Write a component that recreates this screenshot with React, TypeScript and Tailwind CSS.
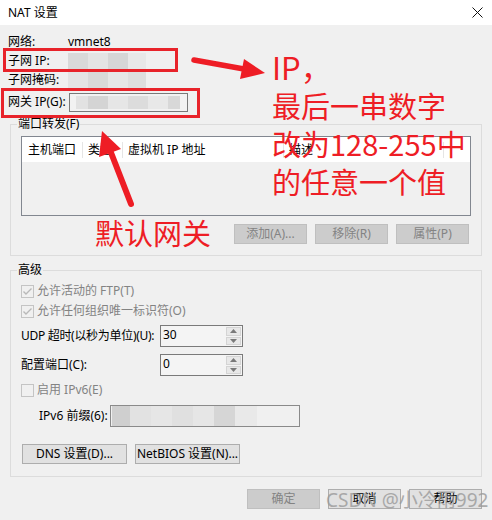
import React from "react";

const red = "#ee1d25";

function Blur({ widths, colors, h }: { widths: number[]; colors: string[]; h: string }) {
  return (
    <div className={`flex ${h}`}>
      {widths.map((w, i) => (
        <div key={i} style={{ width: w, background: colors[i % colors.length] }} />
      ))}
    </div>
  );
}

function CheckBox({ checked }: { checked: boolean }) {
  return (
    <svg width="13" height="13" viewBox="0 0 13 13" className="shrink-0">
      <rect x="0.5" y="0.5" width="12" height="12" fill="#f0f0f0" stroke="#c4c4c4" />
      {checked && <path d="M2.5 6.5 L5 9 L10.5 3.5" fill="none" stroke="#b8b8b8" strokeWidth="1.4" />}
    </svg>
  );
}

function Spinner({ value }: { value: string }) {
  return (
    <div className="flex h-[22px] w-[83px] border border-[#7a7a7a] bg-[#f4f4f4]">
      <div className="flex-1 pl-[2px] pt-[1px] text-[12px] leading-[16px] text-black">{value}</div>
      <div className="flex w-[16px] flex-col gap-[1px] py-[1px] pr-[1px]">
        <div className="flex flex-1 items-center justify-center border border-[#d4d4d4] bg-[#e8e8e8]">
          <svg width="7" height="4" viewBox="0 0 7 4"><path d="M0 4 L3.5 0 L7 4 Z" fill="#7a7a7a" /></svg>
        </div>
        <div className="flex flex-1 items-center justify-center border border-[#d4d4d4] bg-[#e8e8e8]">
          <svg width="7" height="4" viewBox="0 0 7 4"><path d="M0 0 L3.5 4 L7 0 Z" fill="#7a7a7a" /></svg>
        </div>
      </div>
    </div>
  );
}

function Btn({ label, disabled, w = "w-[73px]" }: { label: string; disabled?: boolean; w?: string }) {
  return (
    <div
      className={`flex h-[20px] ${w} items-center justify-center border text-[12px] ${
        disabled ? "border-[#bfbfbf] bg-[#cccccc] text-[#838383]" : "border-[#adadad] bg-[#e1e1e1] text-black"
      }`}
    >
      {label}
    </div>
  );
}

export default function App() {
  return (
    <div className="relative h-[520px] w-[492px] overflow-hidden bg-[#f0f0f0] font-['Noto_Sans','Noto_Sans_CJK_SC',sans-serif] text-[12px] leading-[16px] text-black">
      {/* Title bar */}
      <div className="flex h-[25px] items-center justify-between bg-white pl-[8px] pr-[9px]">
        <span className="text-[12px]">NAT 设置</span>
        <svg width="11" height="11" viewBox="0 0 11 11">
          <path d="M0.5 0.5 L10.5 10.5 M10.5 0.5 L0.5 10.5" stroke="#111" strokeWidth="1" />
        </svg>
      </div>

      {/* Network info */}
      <div className="pl-[8px] pt-[8px]">
        <div className="flex h-[18px] items-center">
          <span className="w-[60px]">网络:</span>
          <span>vmnet8</span>
        </div>
        <div className="flex h-[20px] items-center">
          <span className="w-[60px]">子网 IP:</span>
          <Blur h="h-[17px]" widths={[20, 20, 20, 18]} colors={["#d9d9d9", "#e4e4e4", "#d6d6d6", "#e8e8e8"]} />
        </div>
        <div className="flex h-[18px] items-center">
          <span className="w-[60px]">子网掩码:</span>
          <Blur h="h-[16px]" widths={[20, 20, 20, 18]} colors={["#e4e4e4", "#d9d9d9", "#e6e6e6", "#dedede"]} />
        </div>
        <div className="mt-[3px] flex h-[20px] items-center">
          <span className="w-[61px]">网关 IP(G):</span>
          <div className="flex h-[19px] w-[119px] items-center border border-[#7a7a7a] bg-[#f2f2f2] pl-[6px]">
            <Blur h="h-[13px]" widths={[12, 20, 20, 20, 20, 12]} colors={["#e2e2e2", "#d4d4d4", "#e6e6e6", "#dcdcdc", "#e8e8e8", "#d8d8d8"]} />
          </div>
        </div>
      </div>

      {/* Port forwarding */}
      <fieldset className="mx-[10px] mt-[4px] border border-[#dcdcdc] pb-[11px]">
        <legend className="ml-[6px] px-[1px] leading-[16px]">端口转发(F)</legend>
        <div className="ml-[10px] mt-[4px] h-[80px] w-[450px] border border-[#828790] bg-[#f0f0f0]">
          <div className="grid h-[25px] grid-cols-[61px_40px_161px_160px_1fr] items-center bg-white">
            <div className="border-r border-[#e5e5e5] pl-[6px]">主机端口</div>
            <div className="border-r border-[#e5e5e5] pl-[5px]">类型</div>
            <div className="border-r border-[#e5e5e5] pl-[5px]">虚拟机 IP 地址</div>
            <div className="border-r border-[#e5e5e5] pl-[5px]">描述</div>
            <div />
          </div>
        </div>
        <div className="mt-[8px] flex justify-end gap-[8px] pr-[12px]">
          <Btn label="添加(A)..." disabled />
          <Btn label="移除(R)" disabled />
          <Btn label="属性(P)" disabled />
        </div>
      </fieldset>

      {/* Advanced */}
      <fieldset className="mx-[10px] mt-[6px] border border-[#dcdcdc] pb-[12px]">
        <legend className="ml-[6px] px-[1px] leading-[16px]">高级</legend>
        <div className="mt-[3px] flex h-[20px] items-center gap-[3px] pl-[10px] text-[#838383]">
          <CheckBox checked />
          <span>允许活动的 FTP(T)</span>
        </div>
        <div className="flex h-[20px] items-center gap-[3px] pl-[10px] text-[#838383]">
          <CheckBox checked />
          <span>允许任何组织唯一标识符(O)</span>
        </div>
        <div className="mt-[4px] flex h-[22px] items-center pl-[10px]">
          <span className="w-[139px] tracking-[-0.3px]">UDP 超时(以秒为单位)(U):</span>
          <Spinner value="30" />
        </div>
        <div className="mt-[7px] flex h-[22px] items-center pl-[10px]">
          <span className="w-[139px]">配置端口(C):</span>
          <Spinner value="0" />
        </div>
        <div className="mt-[4px] flex h-[20px] items-center gap-[3px] pl-[10px] text-[#838383]">
          <CheckBox checked={false} />
          <span>启用 IPv6(E)</span>
        </div>
        <div className="mt-[5px] flex h-[22px] items-center pl-[28px]">
          <span className="w-[71px]">IPv6 前缀(6):</span>
          <div className="flex h-[22px] w-[190px] items-center border border-[#8a8a8a] bg-[#f0f0f0] pl-[1px]">
            <Blur h="h-[20px]" widths={[18, 21, 21, 21, 21, 21, 22]} colors={["#cfcfcf", "#e2e2e2", "#e6e6e6", "#e0e0e0", "#e6e6e6", "#d6d6d6", "#e9e9e9"]} />
          </div>
        </div>
        <div className="mt-[17px] flex gap-[8px] pl-[11px]">
          <Btn label="DNS 设置(D)..." w="w-[105px]" />
          <Btn label="NetBIOS 设置(N)..." w="w-[105px]" />
        </div>
      </fieldset>

      <div className="mt-[12px] flex justify-end gap-[8px] pr-[10px]">
        <Btn label="确定" disabled />
        <Btn label="取消" />
        <Btn label="帮助" />
      </div>

      {/* Watermark */}
      <div className="pointer-events-none absolute left-[326px] top-[487px] text-[19px] leading-[26px] text-[#9a9a9a] opacity-80">
        CSDN @小冷雨992
      </div>

      {/* Red annotation boxes */}
      <div className="pointer-events-none absolute left-[3px] top-[48px] h-[24px] w-[175px] border-[3px] border-[#e8232a]" />
      <div className="pointer-events-none absolute left-[1px] top-[88px] h-[30px] w-[199px] border-[3px] border-[#e8232a]" />

      {/* Arrows */}
      <svg className="pointer-events-none absolute left-0 top-0" width="492" height="520" viewBox="0 0 492 520">
        <line x1="194" y1="60" x2="244" y2="69" stroke={red} strokeWidth="5.5" strokeLinecap="round" />
        <polygon points="265,73 244,59 240,79" fill={red} />
        <line x1="131" y1="204" x2="110" y2="150" stroke={red} strokeWidth="6" strokeLinecap="round" />
        <polygon points="102,131 121,149 99,157" fill={red} />
      </svg>

      {/* Red annotation text */}
      <div className="pointer-events-none absolute left-[272px] top-[48px] font-['Noto_Sans_CJK_SC',sans-serif] text-[29px] leading-[38px] text-[#ee1d25]">
        <div className="text-[31px]">IP，</div>
        <div>最后一串数字</div>
        <div>改为128-255中</div>
        <div>的任意一个值</div>
      </div>
      <div className="pointer-events-none absolute left-[95px] top-[213px] font-['Noto_Sans_CJK_SC',sans-serif] text-[29px] leading-[38px] text-[#ee1d25]">
        默认网关
      </div>
    </div>
  );
}
